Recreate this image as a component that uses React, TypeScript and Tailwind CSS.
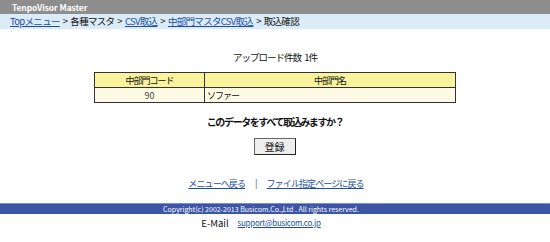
import React from "react";

const jp = { fontFamily: '"Noto Sans CJK JP", "Noto Sans", sans-serif' };

export default function App() {
  return (
    <div className="w-[550px] h-[242px] bg-white text-[#111] flex flex-col" style={jp}>
      <div className="h-[14px] bg-[#8d8d8d] flex items-center pl-[12px]">
        <span className="text-white text-[8.5px] font-bold leading-none tracking-[-0.1px]">TenpoVisor Master</span>
      </div>
      <div className="h-[15px] bg-[#dcebf8] flex items-center pl-[10px] text-[9.5px] leading-none tracking-[-0.7px] whitespace-nowrap">
        <a className="text-[#1d4f9e] underline">Topメニュー</a>
        <span className="mx-[3px]">&gt;</span>
        <span>各種マスタ</span>
        <span className="mx-[3px]">&gt;</span>
        <a className="text-[#1d4f9e] underline">CSV取込</a>
        <span className="mx-[3px]">&gt;</span>
        <a className="text-[#1d4f9e] underline">中部門マスタCSV取込</a>
        <span className="mx-[3px]">&gt;</span>
        <span>取込確認</span>
      </div>
      <div className="h-[22px]" />
      <div className="text-center text-[9.5px] leading-[13px] tracking-[-1px]">アップロード件数&nbsp;&nbsp;&nbsp;1件</div>
      <div className="h-[8px]" />
      <div className="flex justify-center">
        <table className="w-[362px] border-collapse border border-[#333] text-[9px] leading-none tracking-[-1px]">
          <thead>
            <tr className="bg-[#f8f39c] h-[15px]">
              <th className="w-[110px] border border-[#333] font-normal">中部門コード</th>
              <th className="border border-[#333] font-normal">中部門名</th>
            </tr>
          </thead>
          <tbody>
            <tr className="bg-[#fdfbe6] h-[15px]">
              <td className="border border-[#333] text-center text-[#444] tracking-normal">90</td>
              <td className="border border-[#333] pl-[2px]">ソファー</td>
            </tr>
          </tbody>
        </table>
      </div>
      <div className="h-[12px]" />
      <div className="text-center text-[10px] leading-[14px] font-bold tracking-[-1.4px]">このデータをすべて取込みますか？</div>
      <div className="h-[9px]" />
      <div className="flex justify-center">
        <button className="w-[42px] h-[17px] bg-[#eeeeee] border border-[#666] border-b-[#222] border-r-[#222] text-[10px] leading-none flex items-center justify-center ml-[-1px]">登録</button>
      </div>
      <div className="h-[22px]" />
      <div className="flex justify-center items-center text-[9px] leading-[13px] tracking-[-0.9px] gap-[10px] pl-[2px]">
        <a className="text-[#1d4f9e] underline">メニューへ戻る</a>
        <span className="text-[#444]">|</span>
        <a className="text-[#1d4f9e] underline">ファイル指定ページに戻る</a>
      </div>
      <div className="h-[13px]" />
      <div className="h-[11px] bg-[#3c55a6] border-t border-[#7d8fc7] flex items-center justify-center pr-[28px]">
        <span className="text-white text-[7px] leading-none">Copyright(c) 2002-2013 Busicom.Co.,Ltd . All rights reserved.</span>
      </div>
      <div className="flex justify-center items-center leading-[14px] pt-[2px] gap-[9px] pr-[28px]">
        <span className="text-[9.5px] font-normal">E-Mail</span>
        <a className="text-[#1d4f9e] underline text-[8px] tracking-[-0.3px]">support@busicom.co.jp</a>
      </div>
    </div>
  );
}
